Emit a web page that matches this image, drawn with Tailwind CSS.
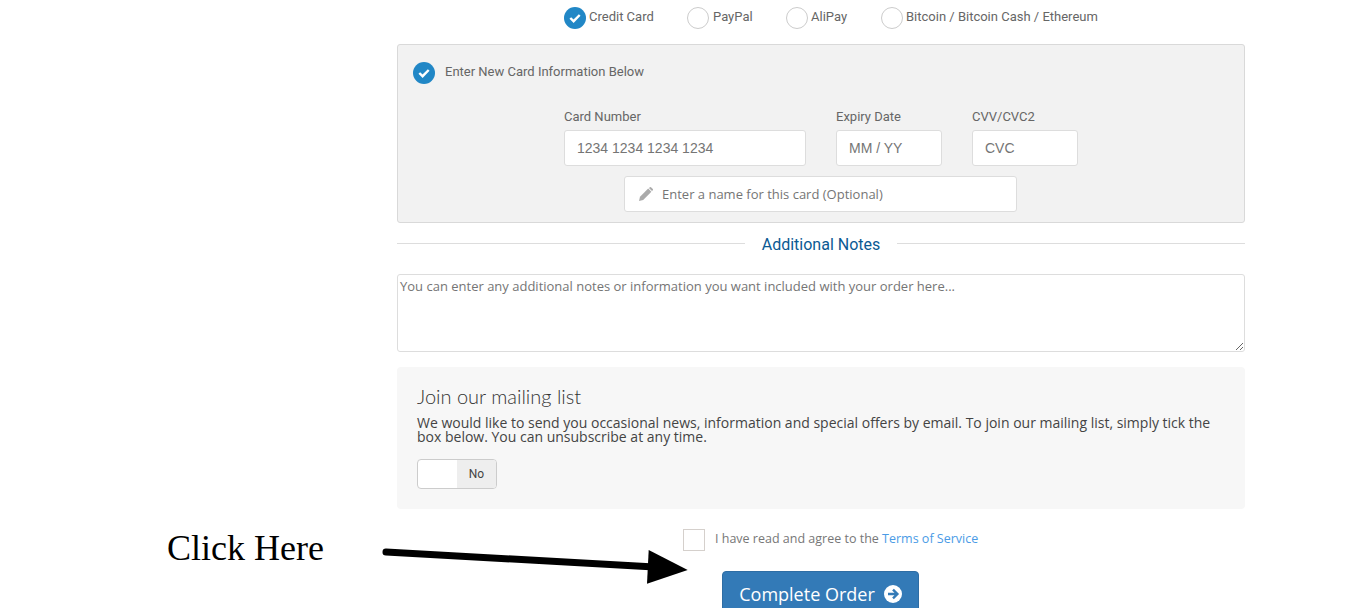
<!DOCTYPE html>
<html>
<head>
<meta charset="utf-8">
<script src="https://cdn.jsdelivr.net/npm/@tailwindcss/browser@4"></script>
</head>
<body class="bg-white">
<div class="relative h-[608px] w-[1349px] overflow-hidden bg-white">
  <main class="ml-[397px] w-[848px] pt-[7px]">
    <!-- payment methods -->
    <div class="flex h-[22px] pl-[167px] font-['Roboto',sans-serif] text-[13px] leading-[20px] text-[#666]">
      <div class="flex h-[22px] w-[123px] items-start gap-[3px]">
        <span class="flex size-[22px] shrink-0 items-center justify-center rounded-full bg-[#2187c6]">
          <svg class="size-[12px]" viewBox="0 0 12 12" fill="none"><path d="M1.300 6 4.600 9.200 10.700 3" stroke="#fff" stroke-width="2.400"/></svg>
        </span>
        <span>Credit Card</span>
      </div>
      <div class="flex h-[22px] w-[99px] items-start gap-[4px]">
        <span class="size-[22px] shrink-0 rounded-full border border-[#ccc] bg-white"></span><span>PayPal</span>
      </div>
      <div class="flex h-[22px] w-[95px] items-start gap-[3px]">
        <span class="size-[22px] shrink-0 rounded-full border border-[#ccc] bg-white"></span><span>AliPay</span>
      </div>
      <div class="flex h-[22px] items-start gap-[3px]">
        <span class="size-[22px] shrink-0 rounded-full border border-[#ccc] bg-white"></span><span>Bitcoin / Bitcoin Cash / Ethereum</span>
      </div>
    </div>

    <!-- card box -->
    <section class="mt-[15px] h-[179px] rounded-[3px] border border-[#d9d9d9] bg-[#f2f2f2] font-['Roboto',sans-serif] text-[#666]">
      <div class="mt-[17px] ml-[15px] flex h-[22px] items-start gap-[10px] text-[13px] leading-[20px]">
        <span class="flex size-[22px] shrink-0 items-center justify-center rounded-full bg-[#2187c6]">
          <svg class="size-[12px]" viewBox="0 0 12 12" fill="none"><path d="M1.300 6 4.600 9.200 10.700 3" stroke="#fff" stroke-width="2.400"/></svg>
        </span>
        <span>Enter New Card Information Below</span>
      </div>
      <div class="mt-[22px] ml-[166px] flex gap-[30px] text-[13px] leading-[22px]">
        <div class="w-[242px]">
          <div class="h-[20px]">Card Number</div>
          <div class="mt-[4px] flex h-[36px] items-center rounded-[3px] border border-[#ddd] bg-white px-[12px] pb-[1px] font-['Liberation_Sans',sans-serif] text-[14px] text-[#757575]">1234 1234 1234 1234</div>
        </div>
        <div class="w-[106px]">
          <div class="h-[20px]">Expiry Date</div>
          <div class="mt-[4px] flex h-[36px] items-center rounded-[3px] border border-[#ddd] bg-white px-[12px] pb-[1px] font-['Liberation_Sans',sans-serif] text-[14px] text-[#757575]">MM / YY</div>
        </div>
        <div class="w-[106px]">
          <div class="h-[20px]">CVV/CVC2</div>
          <div class="mt-[4px] flex h-[36px] items-center rounded-[3px] border border-[#ddd] bg-white px-[12px] pb-[1px] font-['Liberation_Sans',sans-serif] text-[14px] text-[#757575]">CVC</div>
        </div>
      </div>
      <div class="mt-[10px] ml-[226px] flex h-[36px] w-[393px] items-center gap-[9px] rounded-[3px] border border-[#ddd] bg-white pl-[13px] font-['Open_Sans',sans-serif] text-[13px] text-[#757575]">
        <svg class="size-[15px]" viewBox="0 0 15 15" fill="#aaa"><path d="M1 14 2 9.800 10.200 1.600 13.400 4.800 5.200 13Z"/><path d="M10.900 0.900 12 0.200a1 1 0 0 1 1 0L14.800 2a1 1 0 0 1 0 1.200L14 4.100Z"/></svg>
        <span class="relative top-px">Enter a name for this card (Optional)</span>
      </div>
    </section>

    <!-- divider -->
    <div class="mt-[10px] flex h-[21px] items-center font-['Roboto',sans-serif] text-[16px] text-[#0b5a93]">
      <span class="h-px w-[348px] bg-[#ddd]"></span>
      <span class="relative top-px w-[152px] text-center">Additional Notes</span>
      <span class="h-px flex-1 bg-[#ddd]"></span>
    </div>

    <!-- notes -->
    <textarea class="mt-[20px] block h-[78px] w-[848px] rounded-[3px] border border-[#ddd] bg-white px-[2px] pt-[2px] font-['Open_Sans',sans-serif] text-[13px] leading-[18px] placeholder:text-[#757575]" placeholder="You can enter any additional notes or information you want included with your order here..."></textarea>

    <!-- mailing list -->
    <section class="mt-[15px] h-[142px] rounded-[4px] bg-[#f7f7f7] px-[20px] pt-[16px] text-[#444]">
      <h2 class="font-['Lato',sans-serif] text-[20px] leading-[26px] font-light text-[#333]">Join our mailing list</h2>
      <p class="mt-[7px] w-[808px] font-['Open_Sans',sans-serif] text-[14px] leading-[14px]">We would like to send you occasional news, information and special offers by email. To join our mailing list, simply tick the box below. You can unsubscribe at any time.</p>
      <div class="mt-[15px] flex h-[30px] w-[80px] overflow-hidden rounded-[4px] border border-[#ccc] bg-white">
        <span class="w-[39px]"></span>
        <span class="flex flex-1 items-center justify-center bg-[#eee] font-['Roboto',sans-serif] text-[12px] font-normal text-[#444]">No</span>
      </div>
    </section>

    <!-- terms -->
    <div class="mt-[20px] ml-[286px] flex h-[22px] items-start gap-[10px] font-['Open_Sans',sans-serif] text-[12.500px] leading-[20px] text-[#777]">
      <span class="size-[22px] shrink-0 border border-[#d5d0cc] bg-white"></span>
      <span>I have read and agree to the <a class="text-[#4a9be6]">Terms of Service</a></span>
    </div>

    <!-- submit -->
    <button class="mt-[20px] ml-[325px] flex h-[46px] w-[197px] items-center justify-center gap-[9px] rounded-[4px] border border-[#2e6da4] bg-[#337ab7] font-['Open_Sans',sans-serif] text-[18px] text-white">
      <span>Complete Order</span>
      <svg class="size-[18px]" viewBox="0 0 18 18"><circle cx="9" cy="9" r="9" fill="#fff"/><path d="M4 9H13M9 4.600 13.400 9 9 13.400" fill="none" stroke="#337ab7" stroke-width="2.400"/></svg>
    </button>
  </main>

  <!-- annotation over the page -->
  <div class="absolute left-[167px] top-[526px] font-['Liberation_Serif',serif] text-[36px] leading-[44px] text-black">Click Here</div>
  <svg class="absolute left-[375px] top-[540px]" width="325" height="50" viewBox="0 0 325 50">
    <path d="M11 12 275 26.700" stroke="#000" stroke-width="7" stroke-linecap="round" fill="none"/>
    <path d="M273.700 10 272 43.700 312.700 30Z" fill="#000"/>
  </svg>
</div>
</body>
</html>
